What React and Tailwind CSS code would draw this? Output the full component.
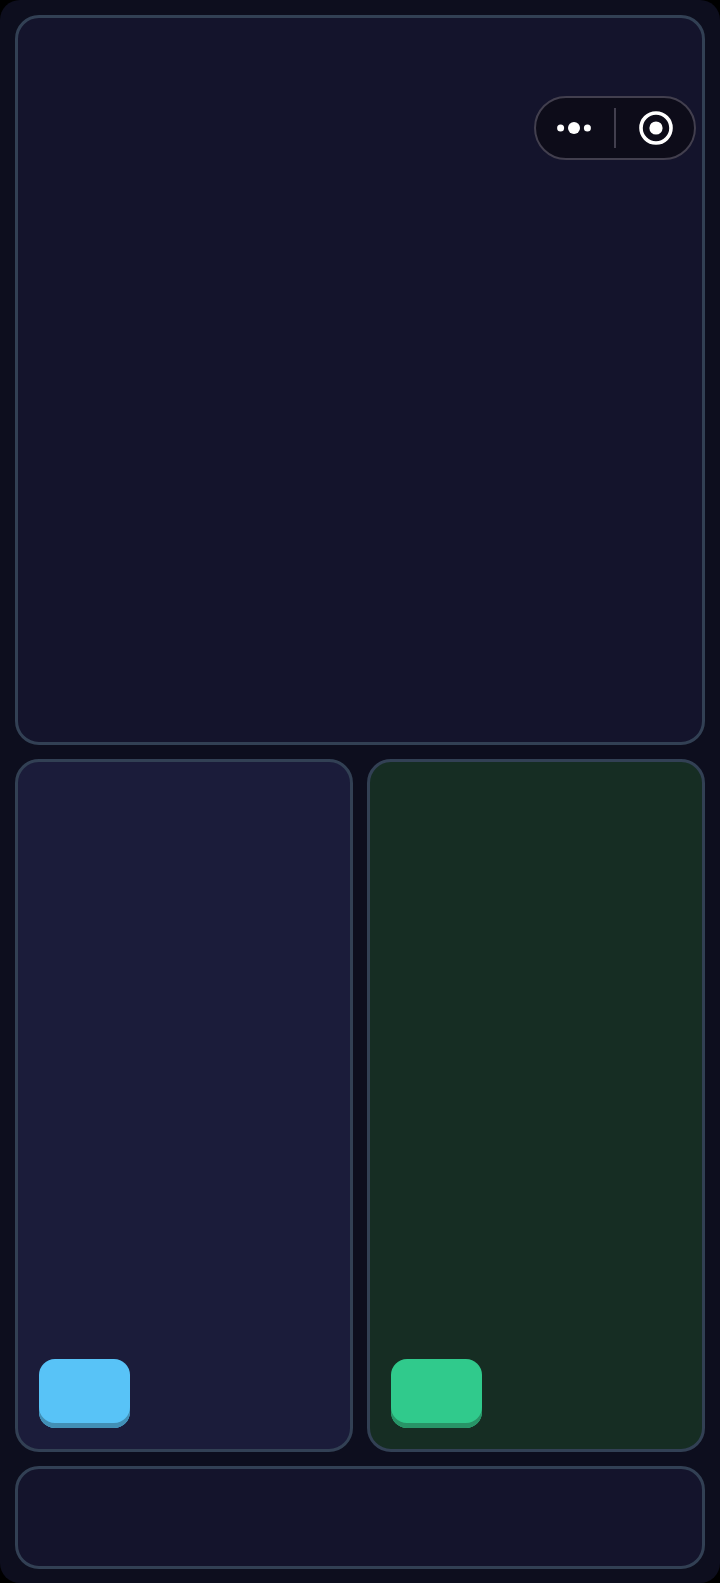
import clsx from 'clsx';

const PLAYERS = [
  {
    id: 'blue',
    label: 'Blue action',
    panel: 'bg-[#1b1c3a]',
    button: 'bg-[#58c3f7] shadow-[inset_0_-5px_0_#428fb5]',
  },
  {
    id: 'green',
    label: 'Green action',
    panel: 'bg-[#162d23]',
    button: 'bg-[#30ca8c] shadow-[inset_0_-5px_0_#289467]',
  },
];

function Panel({ className, children }) {
  return (
    <section className={clsx('rounded-3xl border-3 border-[#324054]', className)}>
      {children}
    </section>
  );
}

function Capsule() {
  return (
    <div className="absolute top-24 right-6 flex h-16 w-[162px] items-center rounded-full border-2 border-[#423f4e] bg-[#0d0c19] text-white">
      <button type="button" aria-label="More" className="flex flex-1 items-center justify-center pr-0.5">
        <svg viewBox="0 0 34 12" className="h-3 w-[34px]" fill="currentColor">
          <circle cx="3.6" cy="6" r="3.5" />
          <circle cx="17" cy="6" r="6" />
          <circle cx="30.4" cy="6" r="3.5" />
        </svg>
      </button>
      <span className="h-10 w-0.5 bg-[#423f4e]" />
      <button type="button" aria-label="Close" className="flex flex-1 items-center justify-center pl-0.5">
        <svg viewBox="0 0 34 34" className="size-[34px]" fill="none">
          <circle cx="17" cy="17" r="15" stroke="currentColor" strokeWidth="3.6" />
          <circle cx="17" cy="17" r="6.6" fill="currentColor" />
        </svg>
      </button>
    </div>
  );
}

export default function App() {
  return (
    <div className="min-h-screen bg-black font-['Liberation_Sans',sans-serif]">
      <main className="relative flex min-h-screen flex-col gap-3.5 rounded-[20px] bg-[#0d0e1e] px-[15px] pt-[15px] pb-3.5">
        <Panel className="grow-[724] basis-0 bg-[#14142c]" />

        <div className="grid grow-[693] basis-0 grid-cols-2 gap-3.5">
          {PLAYERS.map((player) => (
            <Panel key={player.id} className={clsx('flex items-end p-[21px]', player.panel)}>
              <button
                type="button"
                aria-label={player.label}
                className={clsx('h-[69px] w-[91px] rounded-2xl', player.button)}
              />
            </Panel>
          ))}
        </div>

        <Panel className="min-h-[103px] bg-[#14142c]" />

        <Capsule />
      </main>
    </div>
  );
}
